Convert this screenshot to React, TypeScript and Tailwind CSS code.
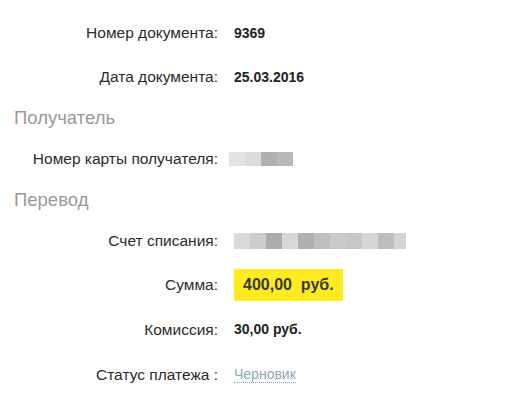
const cardBlocks = ["#e3e3e3", "#dcdcdc", "#b0b0b0", "#b8b8b8"];
const accountBlocks = [
  "#dadada",
  "#cbcccd",
  "#acacac",
  "#d8d8d8",
  "#b3afac",
  "#bebfc1",
  "#cacaca",
  "#c6c7c9",
  "#d8d5d4",
  "#bcbdbc",
  "#d2d5d8",
];

const Row = ({ label, h = "h-[44px]", children }: { label: string; h?: string; children: React.ReactNode }) => (
  <div className={`flex items-center ${h}`}>
    <div className="w-[218px] shrink-0 text-right text-[15.5px] text-[#2b2b2b]">{label}</div>
    <div className="pl-4 flex items-center">{children}</div>
  </div>
);

const Heading = ({ title }: { title: string }) => (
  <div className="h-[38px] flex items-center pl-[14px] text-[18.5px] text-[#999]">{title}</div>
);

const Pixels = ({ colors, h, last }: { colors: string[]; h: string; last?: boolean }) => (
  <div className={`flex ${h}`}>
    {colors.map((c, i) => (
      <div
        key={i}
        className={last && i === colors.length - 1 ? "w-[12px]" : "w-[16px]"}
        style={{ backgroundColor: c }}
      />
    ))}
  </div>
);

export default function App() {
  return (
    <div className="w-[526px] h-[416px] bg-white pt-[11px] font-['Liberation_Sans',Arial,sans-serif]">
      <Row label="Номер документа:">
        <span className="text-[14px] font-bold text-[#222]">9369</span>
      </Row>
      <Row label="Дата документа:">
        <span className="text-[14px] font-bold text-[#222]">25.03.2016</span>
      </Row>
      <Heading title="Получатель" />
      <Row label="Номер карты получателя:">
        <div className="-ml-[5px]">
          <Pixels colors={cardBlocks} h="h-[14px]" />
        </div>
      </Row>
      <Heading title="Перевод" />
      <Row label="Счет списания:">
        <Pixels colors={accountBlocks} h="h-[16px]" last />
      </Row>
      <Row label="Сумма:">
        <div className="bg-[#ffeb1f] h-[32px] px-[9px] flex items-center text-[16px] font-bold text-[#3a3a3a] whitespace-pre">
          400,00  руб.
        </div>
      </Row>
      <Row label="Комиссия:" h="h-[45px]">
        <span className="text-[14px] font-bold text-[#222]">30,00 руб.</span>
      </Row>
      <Row label="Статус платежа :" h="h-[45px]">
        <span className="text-[14px] text-[#8aa8b0] border-b border-dotted border-[#8aa8b0] leading-[16px]">
          Черновик
        </span>
      </Row>
    </div>
  );
}
